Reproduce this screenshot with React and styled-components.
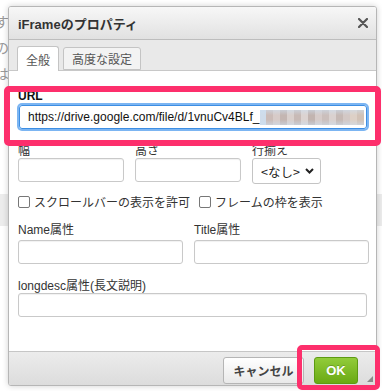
import React from 'react';
import styled, { createGlobalStyle } from 'styled-components';

const GlobalStyle = createGlobalStyle`
  html, body {
    margin: 0;
    padding: 0;
    background: #fff;
  }
  body {
    font-family: 'Liberation Sans', 'Noto Sans CJK JP', sans-serif;
    color: #222;
  }
`;

const Page = styled.div`
  position: relative;
  width: 382px;
  height: 391px;
  overflow: hidden;
  background: #fff;
`;

const Backdrop = styled.div`
  display: flex;
  flex-direction: column;
  padding-top: 8px;
  margin-left: -5px;
  font-family: 'Noto Sans CJK JP', sans-serif;
  font-size: 14px;
  line-height: 26px;
  color: #9a9a9a;
`;

const BackdropBand = styled.div`
  margin-top: 108px;
  height: 32px;
  background: #ececec;
`;

const Dialog = styled.div`
  position: absolute;
  left: 8px;
  top: 6px;
  width: 369px;
  height: 380px;
  box-sizing: border-box;
  display: flex;
  flex-direction: column;
  border: 1px solid #b6b6b6;
  border-radius: 3px;
  background: #fff;
  box-shadow: 0 0 6px rgba(0, 0, 0, 0.18);
  overflow: hidden;
`;

const TitleBar = styled.div`
  height: 32px;
  flex-shrink: 0;
  display: flex;
  align-items: center;
  justify-content: space-between;
  padding: 0 8px 0 9px;
  background: linear-gradient(#f7f7f7, #e1e1e1);
  border-bottom: 1px solid #bdbdbd;
`;

const Title = styled.div`
  font-size: 13px;
  font-weight: bold;
  color: #333;
`;

const Close = styled.svg`
  width: 10px;
  height: 10px;
`;

const TabBar = styled.div`
  height: 31px;
  flex-shrink: 0;
  box-sizing: border-box;
  display: flex;
  align-items: flex-end;
  gap: 4px;
  padding-left: 8px;
  background: #e9e9e9;
  border-bottom: 1px solid #c8c8c8;
`;

const Tab = styled.div`
  height: ${(p) => (p.$active ? '25px' : '23px')};
  margin-bottom: ${(p) => (p.$active ? '-1px' : '0')};
  box-sizing: border-box;
  display: flex;
  align-items: center;
  padding: 0 8px;
  font-family: 'Noto Sans CJK JP', sans-serif;
  font-size: 12px;
  color: #555;
  background: ${(p) => (p.$active ? '#fff' : '#f3f3f3')};
  border: 1px solid #c4c4c4;
  border-bottom: ${(p) => (p.$active ? 'none' : '1px solid #c4c4c4')};
  border-radius: 3px 3px 0 0;
`;

const Body = styled.div`
  flex: 1;
  display: flex;
  flex-direction: column;
  padding: 18px 8px 0 9px;
`;

const Field = styled.div`
  display: flex;
  flex-direction: column;
  flex: ${(p) => p.$grow || 'none'};
  width: ${(p) => p.$w || 'auto'};
  margin-top: ${(p) => p.$mt || '0'};
  margin-right: ${(p) => p.$mr || '0'};
`;

const Label = styled.div`
  font-size: 12px;
  line-height: 14px;
  height: 14px;
  font-weight: ${(p) => (p.$bold ? 'bold' : 'normal')};
  color: ${(p) => (p.$bold ? '#111' : '#333')};
  margin-bottom: ${(p) => p.$mb || '0'};
  white-space: nowrap;
`;

const Input = styled.div`
  height: 24px;
  box-sizing: border-box;
  border: 1px solid #c9c9c9;
  border-radius: 3px;
  background: #fff;
  box-shadow: inset 0 1px 1px rgba(0, 0, 0, 0.06);
`;

const UrlInput = styled.div`
  height: 24px;
  margin: 2px 1px 0 1px;
  box-sizing: border-box;
  display: flex;
  align-items: center;
  padding-left: 8px;
  border: 1px solid #3d8ee3;
  border-radius: 3px;
  box-shadow: 0 0 0 2px #7cb5f2;
  font-size: 12px;
  color: #111;
  white-space: nowrap;
  overflow: hidden;
`;

const Blur = styled.span`
  display: inline-block;
  width: 104px;
  height: 15px;
  margin-left: 1px;
  background:
    linear-gradient(rgba(205, 224, 242, 0.55), rgba(205, 224, 242, 0) 35%, rgba(205, 224, 242, 0) 65%, rgba(205, 224, 242, 0.55)),
    linear-gradient(90deg,
      #cfdcea 0 6px, #cbbcb8 6px 13px, #d7cbc8 13px 20px, #c4b6b2 20px 27px,
      #d9cfcc 27px 34px, #c8bab6 34px 41px, #dcd3d1 41px 48px, #c2b4b0 48px 55px,
      #d6cbc9 55px 62px, #cbbfbc 62px 69px, #dad1cf 69px 76px, #c6b9b5 76px 83px,
      #d3c8c5 83px 90px, #ddd0c6 90px 97px, #d2c2b6 97px 104px);
`;

const Row = styled.div`
  display: flex;
  gap: ${(p) => p.$gap || '11px'};
  margin-top: ${(p) => p.$mt || '0'};
  align-items: ${(p) => p.$align || 'flex-start'};
`;

const Select = styled.div`
  width: 69px;
  height: 26px;
  box-sizing: border-box;
  display: flex;
  align-items: center;
  justify-content: space-between;
  padding: 0 6px 0 8px;
  border: 1px solid #c4c4c4;
  border-radius: 3px;
  background: #fff;
  font-family: 'Noto Sans CJK JP', sans-serif;
  font-size: 12.5px;
  color: #222;
`;

const Check = styled.label`
  display: flex;
  align-items: center;
  gap: 4px;
  font-family: 'Noto Sans CJK JP', sans-serif;
  font-size: 12px;
  line-height: 16px;
  color: #333;
`;

const Box = styled.span`
  width: 12px;
  height: 12px;
  box-sizing: border-box;
  border: 1px solid #777;
  border-radius: 2px;
  background: #fff;
`;

const Footer = styled.div`
  height: 34px;
  flex-shrink: 0;
  box-sizing: border-box;
  display: flex;
  align-items: flex-start;
  justify-content: flex-end;
  gap: 10px;
  padding: 5px 18px 0 0;
  background: linear-gradient(#ececec, #dcdcdc);
  border-top: 1px solid #c6c6c6;
  position: relative;
`;

const Button = styled.div`
  height: 27px;
  box-sizing: border-box;
  display: flex;
  align-items: center;
  justify-content: center;
  white-space: nowrap;
  border-radius: 3px;
  font-size: ${(p) => (p.$ok ? '13px' : '12px')};
  font-weight: bold;
  font-family: 'Liberation Sans', 'Noto Sans CJK JP', sans-serif;
  color: ${(p) => (p.$ok ? '#fff' : '#444')};
  background: ${(p) =>
    p.$ok ? 'linear-gradient(#92cc3a, #6aa914)' : 'linear-gradient(#fff, #e9e9e9)'};
  border: 1px solid ${(p) => (p.$ok ? '#5d9a12' : '#b5b5b5')};
  width: ${(p) => p.$w};
  text-shadow: ${(p) => (p.$ok ? '0 -1px 0 rgba(0,0,0,0.2)' : 'none')};
`;

const Grip = styled.span`
  position: absolute;
  right: 3px;
  bottom: 3px;
  width: 0;
  height: 0;
  border-left: 6px solid transparent;
  border-bottom: 6px solid #8a8a8a;
`;

const Highlight = styled.div`
  position: absolute;
  left: ${(p) => p.$x}px;
  top: ${(p) => p.$y}px;
  width: ${(p) => p.$w}px;
  height: ${(p) => p.$h}px;
  box-sizing: border-box;
  border: ${(p) => p.$t}px solid #fd2f6c;
  border-radius: 5px;
  pointer-events: none;
`;

export default function App() {
  return (
    <Page>
      <GlobalStyle />
      <Backdrop>
        <div>す</div>
        <div>の</div>
        <div>は</div>
        <BackdropBand />
      </Backdrop>
      <Dialog>
        <TitleBar>
          <Title>iFrameのプロパティ</Title>
          <Close viewBox="0 0 10 10">
            <path d="M1 1L9 9M9 1L1 9" stroke="#555" strokeWidth="2.2" strokeLinecap="round" />
          </Close>
        </TitleBar>
        <TabBar>
          <Tab $active>全般</Tab>
          <Tab>高度な設定</Tab>
        </TabBar>
        <Body>
          <Field>
            <Label $bold>URL</Label>
            <UrlInput>
              https://drive.google.com/file/d/1vnuCv4BLf_
              <Blur />
            </UrlInput>
          </Field>
          <Row $mt="15px">
            <Field $w="106px">
              <Label>幅</Label>
              <Input />
            </Field>
            <Field $w="106px">
              <Label>高さ</Label>
              <Input />
            </Field>
            <Field>
              <Label>行揃え</Label>
              <Select>
                &lt;なし&gt;
                <svg width="9" height="6" viewBox="0 0 9 6">
                  <path d="M1 1L4.5 4.5L8 1" stroke="#222" strokeWidth="2" fill="none" />
                </svg>
              </Select>
            </Field>
          </Row>
          <Row $mt="10px" $gap="9px" $align="center">
            <Check>
              <Box />
              スクロールバーの表示を許可
            </Check>
            <Check>
              <Box />
              フレームの枠を表示
            </Check>
          </Row>
          <Row $mt="13px" $gap="11px">
            <Field $w="165px">
              <Label $mb="3px">Name属性</Label>
              <Input />
            </Field>
            <Field $w="175px">
              <Label $mb="3px">Title属性</Label>
              <Input />
            </Field>
          </Row>
          <Field $mt="15px" $mr="1px">
            <Label>longdesc属性(長文説明)</Label>
            <Input />
          </Field>
        </Body>
        <Footer>
          <Button $w="81px">キャンセル</Button>
          <Button $ok $w="44px">OK</Button>
          <Grip />
        </Footer>
      </Dialog>
      <Highlight $x={4} $y={86} $w={377} $h={60} $t={6} />
      <Highlight $x={297} $y={345} $w={83} $h={45} $t={5} />
    </Page>
  );
}
